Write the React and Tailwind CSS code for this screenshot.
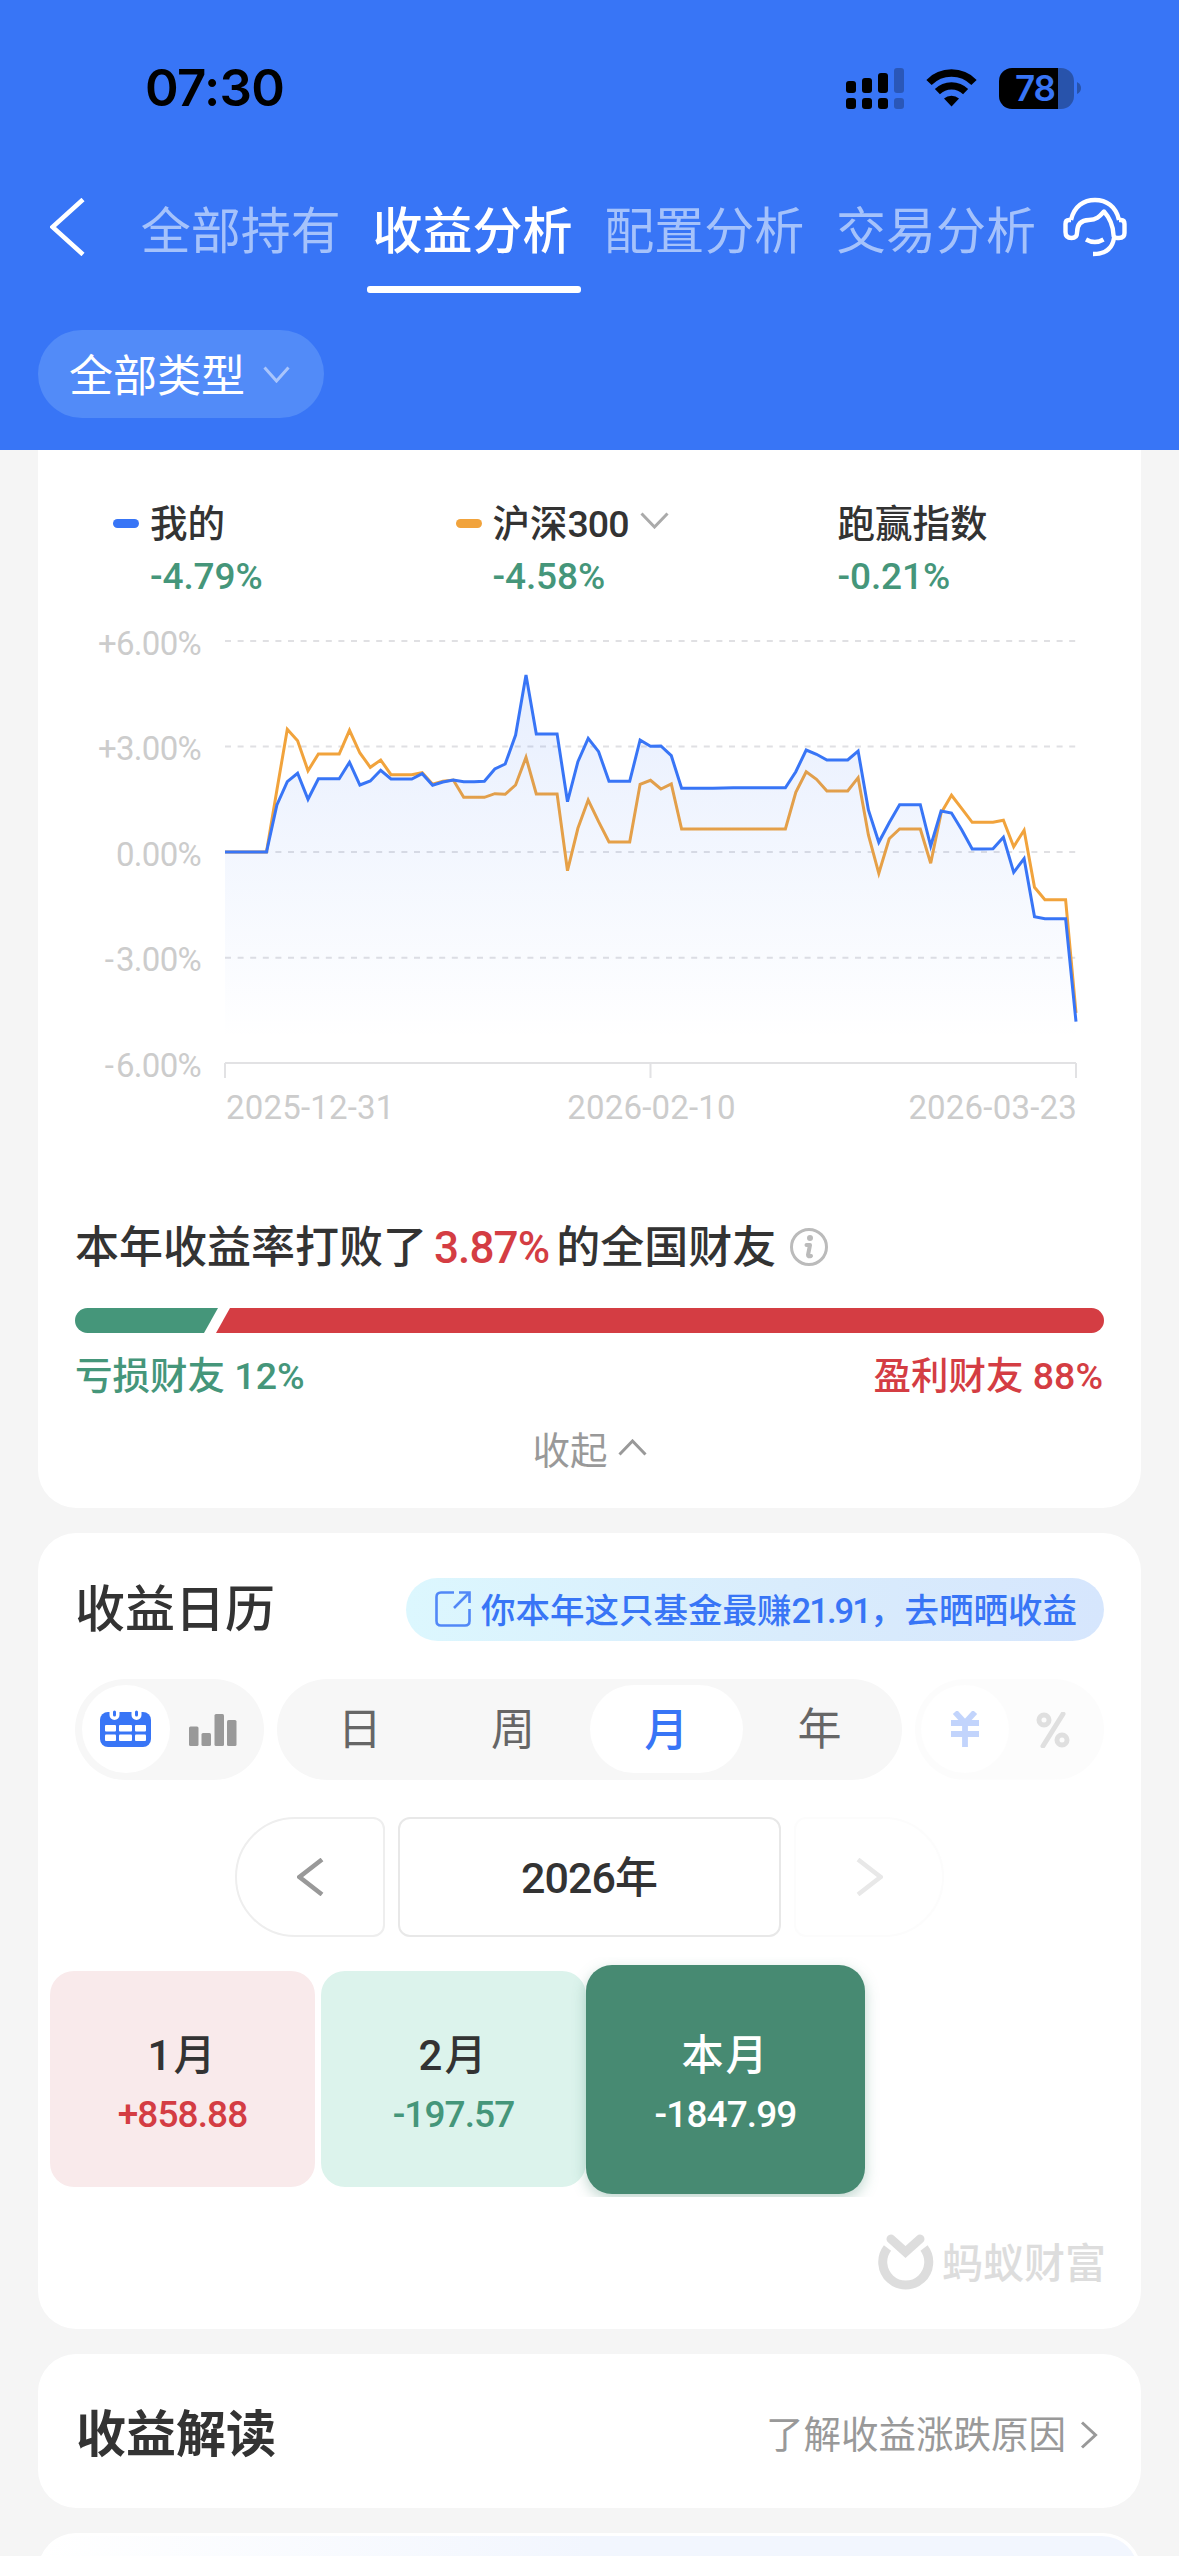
import React from "react";

const MINE = [
  852, 852, 852, 852, 852, 805, 781.7, 773.3, 799.3, 778.7, 778.7, 778.7, 762.3, 785, 781, 770.3, 779, 779, 779, 773.7,
  785.3, 782, 780, 781.7, 781.7, 781.3, 769, 764, 735, 675, 734, 734, 734, 801.7, 761.7, 738.3, 751.7, 781.3, 781.3,
  781.3, 740, 746.3, 746, 755.7, 788.3, 788.3, 788.3, 788.2, 788, 787.8, 787.7, 787.7, 787.7, 787.7, 787.7, 771.7, 750,
  754.3, 760, 760, 760, 751, 810, 842.3, 822.7, 804.7, 804.7, 804.7, 846, 811, 813, 830, 849, 849, 848.7, 837.3, 872.3,
  858.7, 916.7, 918.7, 918.7, 918.7, 1021.7,
];
const INDEX = [
  852, 852, 852, 852, 852, 790, 729.3, 740.7, 770.7, 754, 754, 754, 730.3, 753, 767.3, 760, 774.7, 774.7, 774.7, 772.7,
  784.3, 781.3, 780, 797.3, 797.3, 797.3, 793.7, 794.3, 785, 757.3, 794, 794, 794, 870.7, 828.3, 800, 821.7, 842, 842,
  842, 784.3, 780.3, 789, 784, 829, 829, 829, 829, 829, 829, 829, 829, 829, 829, 829, 792.3, 771.7, 779.3, 791, 791,
  791, 777.7, 835, 873.3, 838.7, 829, 829, 829, 863.3, 813, 795.3, 808.7, 822.3, 822.3, 822.3, 820.3, 846.7, 830.3,
  887.3, 899.7, 899.7, 899.7, 1013,
];

const TOP = 630;
const toPoints = (ys) => ys.map((y, i) => `${(3 + i * 10.378).toFixed(1)},${(y - TOP).toFixed(1)}`).join(" ");

function Chevron({ w, h, dir, stroke, sw = 3, className = "" }) {
  const d = {
    down: `M1.5 1.5 L${w / 2} ${h - 2} L${w - 1.5} 1.5`,
    up: `M1.5 ${h - 1.5} L${w / 2} 2 L${w - 1.5} ${h - 1.5}`,
    left: `M${w - 2} 1.5 L2.5 ${h / 2} L${w - 2} ${h - 1.5}`,
    right: `M2 1.5 L${w - 2.5} ${h / 2} L2 ${h - 1.5}`,
  }[dir];
  return (
    <svg width={w} height={h} viewBox={`0 0 ${w} ${h}`} className={`shrink-0 ${className}`}>
      <path d={d} fill="none" stroke={stroke} strokeWidth={sw} />
    </svg>
  );
}

function StatusIcons() {
  return (
    <div className="flex items-center text-black">
      <svg width="58" height="41" viewBox="0 0 58 41">
        <rect x="0" y="13" width="10" height="12" rx="3" />
        <rect x="16" y="10" width="10" height="15" rx="3" />
        <rect x="32" y="5" width="10" height="20" rx="3" />
        <rect x="48" y="0" width="10" height="25" rx="3" opacity=".25" />
        <rect x="0" y="30" width="10" height="11" rx="3" />
        <rect x="16" y="30" width="10" height="11" rx="3" />
        <rect x="32" y="30" width="10" height="11" rx="3" />
        <rect x="48" y="30" width="10" height="11" rx="3" opacity=".25" />
      </svg>
      <svg width="51" height="38" viewBox="0 0 51 38" className="ml-[22px]">
        <path d="M3 13.5 A31.5 31.5 0 0 1 48 13.5" fill="none" stroke="#000" strokeWidth="7.4" />
        <path d="M11.4 22.6 A20 20 0 0 1 39.6 22.6" fill="none" stroke="#000" strokeWidth="7.2" />
        <path d="M18 29.6 A11 11 0 0 1 33 29.6 L25.5 37.4 Z" />
      </svg>
      <div className="ml-[22px] flex h-[41px] w-[75px] items-center justify-center overflow-hidden rounded-[13px] bg-[linear-gradient(to_right,#000_59px,#2853ab_59px)]">
        <span className="-ml-[3px] font-['Inter'] text-[35px] font-semibold leading-[41px] tracking-[-1px] text-[#3875f6]">78</span>
      </div>
      <svg width="4" height="12" viewBox="0 0 4 12" className="ml-[3px]">
        <path d="M0 0 Q4 2 4 6 Q4 10 0 12Z" fill="#2853ab" />
      </svg>
    </div>
  );
}

function Headset() {
  return (
    <svg width="66" height="62" viewBox="0 0 66 62" className="ml-[9px] shrink-0" fill="none" stroke="#fff" strokeWidth="4.4" strokeLinejoin="round">
      <path d="M9 23 C12 9 22 3 33 3 C44 3 54 9 57 23" />
      <path d="M9 23 H7 Q3.500 23 3.500 27 V35 Q3.500 41 9.500 41 Q15 41 15 36 C15 26 20 23 27 23 C35 23 38 19 42 14.500 C47 20 51 26 51.500 38 Q51.500 41 55 41 H57 Q62.500 41 62.500 36 V27 Q62.500 23 59 23 H57" />
      <path d="M24 42.500 Q33 47.500 41.500 42.500" />
      <path d="M52 41 C50.500 51 44 57 31 57" />
    </svg>
  );
}

const Tab = ({ children, active }) => (
  <div className="flex w-[231.7px] flex-col items-center">
    <span className={active ? "-ml-[2px] h-[60px] text-[50px] font-medium leading-[60px] text-white" : "-ml-[2px] h-[60px] text-[50px] leading-[60px] text-[#a5c2fb]"}>
      {children}
    </span>
    {active && <span className="mt-[24px] h-[7px] w-[214px] rounded-[3px] bg-white" />}
  </div>
);

function Header() {
  return (
    <header className="h-[450px] bg-[#3875f6]">
      <div className="flex h-[176px] items-center justify-between pl-[145px] pr-[98px]">
        <span className="font-['Inter'] text-[51px] font-semibold leading-[60px] tracking-[-0.7px] text-black">07:30</span>
        <StatusIcons />
      </div>
      <div className="flex h-[122px] items-start pl-[50px]">
        <Chevron w={35} h={58} dir="left" stroke="#fff" sw={4.6} className="mt-[22px]" />
        <div className="ml-[41px] mt-[26px] flex">
          <Tab>全部持有</Tab>
          <Tab active>收益分析</Tab>
          <Tab>配置分析</Tab>
          <Tab>交易分析</Tab>
        </div>
        <div className="mt-[21px]">
          <Headset />
        </div>
      </div>
      <div className="ml-[38px] mt-[32px] flex h-[88px] w-[286px] items-center rounded-full bg-[#528bf8] pl-[31px]">
        <span className="pt-[5px] text-[44px] leading-[60px] text-white">全部类型</span>
        <Chevron w={27} h={17} dir="down" stroke="#a9c5fc" sw={3} className="ml-[18px]" />
      </div>
    </header>
  );
}

function Legend({ color, name, digits, value, arrow }) {
  return (
    <div className="flex">
      {color && <span className={`mt-[31px] mr-[11px] h-[9px] w-[26px] rounded-full ${color}`} />}
      <div>
        <div className="flex h-[70px] items-center pt-[2px] text-[37.500px] font-medium leading-[50px] text-[#333]">
          {name}
          {digits && <span className="tracking-[-1px]">{digits}</span>}
          {arrow && <Chevron w={29} h={17} dir="down" stroke="#aaa" sw={3} className="-mt-[8px] ml-[12px]" />}
        </div>
        <div className="-mt-[6px] h-[50px] text-[37px] font-medium leading-[50px] tracking-[-0.1px] text-[#45967a]">{value}</div>
      </div>
    </div>
  );
}

function Chart() {
  const grid = [641, 746.5, 852, 957.7, 1063].map((y) => y - TOP);
  return (
    <div className="mt-[28px]">
      <div className="flex h-[450px]">
        <div className="flex w-[163px] flex-col text-right text-[33px] tracking-[-0.7px] text-[#ccc]">
          {["+6.00%", "+3.00%", "0.00%", "-3.00%", "-6.00%"].map((t) => (
            <span key={t} className="mb-[65.400px] h-[40px] shrink-0 leading-[28px]">
              {t[0] === "-" ? <span className="tracking-[2px]">-</span> : t[0]}
              {t.slice(1)}
            </span>
          ))}
        </div>
        <svg width="860" height="450" viewBox="0 0 860 450" className="ml-[21px]">
          <defs>
            <linearGradient id="area" x1="0" y1="45" x2="0" y2="410" gradientUnits="userSpaceOnUse">
              <stop offset="0" stopColor="#3875f6" stopOpacity=".12" />
              <stop offset="1" stopColor="#3875f6" stopOpacity="0" />
            </linearGradient>
          </defs>
          {grid.map((y) => (
            <line key={y} x1="3" x2="854" y1={y} y2={y} stroke="#e0e0e3" strokeWidth="2" strokeDasharray="6 6.600" />
          ))}
          <path d="M3 433 H854 M3 433 V448 M428.500 433 V448 M854 433 V448" stroke="#e2e2e4" strokeWidth="2" fill="none" />
          <polyline points={toPoints(INDEX)} fill="none" stroke="#f1a33c" strokeWidth="3" />
          <polygon points={`3,433 ${toPoints(MINE)} 854,433`} fill="url(#area)" />
          <polyline points={toPoints(MINE)} fill="none" stroke="#3875f6" strokeWidth="3" />
        </svg>
      </div>
      <div className="ml-[188px] mr-[64px] mt-[8px] flex h-[40px] items-center justify-between text-[33px] tracking-[0.2px] text-[#ccc]">
        <span>2025-12-31</span>
        <span>2026-02-10</span>
        <span>2026-03-23</span>
      </div>
    </div>
  );
}

function ProfitCard() {
  return (
    <section className="h-[1058px] rounded-b-[38px] bg-white">
      <div className="grid grid-cols-[342.5px_382px_1fr] pl-[75px] pt-[38px]">
        <Legend color="bg-[#3875f6]" name="我的" value="-4.79%" />
        <Legend color="bg-[#f1a33c]" name="沪深" digits="300" value="-4.58%" arrow />
        <Legend name="跑赢指数" value="-0.21%" />
      </div>
      <Chart />
      <div className="mt-[90px] flex h-[60px] items-center pl-[37px] text-[44px] font-medium leading-[60px] text-[#333]">
        本年收益率打败了
        <span className="mx-[7px] tracking-[-0.900px] text-[#d43d43]">3.87%</span>
        的全国财友
        <svg width="38" height="38" viewBox="0 0 38 38" className="-mt-[2px] ml-[14px]" fill="none" stroke="#bbb">
          <circle cx="19" cy="19" r="17.500" strokeWidth="3" />
          <circle cx="20" cy="10" r="3" fill="#bbb" stroke="none" />
          <path d="M16.500 17 H20 L18 27 Q18 29 21 28" strokeWidth="4" strokeLinecap="round" strokeLinejoin="round" />
        </svg>
      </div>
      <svg width="1029" height="25" viewBox="0 0 1029 25" className="ml-[37px] mt-[30px] block">
        <path d="M12.500 0 H143 L129 25 H12.500 A12.500 12.500 0 0 1 12.500 0Z" fill="#45967a" />
        <path d="M155 0 H1016.500 A12.500 12.500 0 0 1 1016.500 25 H141Z" fill="#d43d43" />
      </svg>
      <div className="ml-[37px] mr-[38px] mt-[18px] flex justify-between text-[37.500px] font-medium leading-[50px]">
        <span className="text-[#45967a]">亏损财友 12%</span>
        <span className="text-[#d43d43]">盈利财友 88%</span>
      </div>
      <div className="mt-[25px] flex items-center justify-center text-[37.500px] leading-[50px] text-[#999]">
        收起
        <Chevron w={29} h={17} dir="up" stroke="#999" sw={3} className="-mt-[7px] ml-[10px]" />
      </div>
    </section>
  );
}

function CalendarIcon() {
  return (
    <svg width="52" height="38" viewBox="0 0 52 38">
      <rect x="0" y="2" width="51" height="35" rx="8" fill="#3875f6" />
      <path d="M14.500 0 V5 M36.500 0 V5" stroke="#fff" strokeWidth="10" strokeLinecap="round" />
      <path d="M14.500 2 V5 M36.500 2 V5" stroke="#3875f6" strokeWidth="3" strokeLinecap="round" />
      <g fill="#fff">
        <rect x="5" y="15" width="11" height="6.500" rx="1" />
        <rect x="19" y="15" width="13" height="6.500" rx="1" />
        <rect x="35" y="15" width="11" height="6.500" rx="1" />
        <rect x="5" y="24.500" width="11" height="6.500" rx="1" />
        <rect x="19" y="24.500" width="13" height="6.500" rx="1" />
        <rect x="35" y="24.500" width="11" height="6.500" rx="1" />
      </g>
    </svg>
  );
}

function Segments() {
  return (
    <div className="ml-[37px] mt-[38px] flex h-[101px] text-[44px] leading-[60px] text-[#666]">
      <div className="flex w-[189px] items-center rounded-full bg-[#f7f7f7] pl-[7px]">
        <div className="mb-px flex h-[88px] w-[88px] items-center justify-center rounded-full bg-white">
          <CalendarIcon />
        </div>
        <svg width="48" height="32" viewBox="0 0 48 32" className="ml-[19px]" fill="#999">
          <rect x="0" y="12.500" width="9.500" height="19.500" rx="1.500" />
          <rect x="12.500" y="19" width="9.500" height="13" rx="1.500" />
          <rect x="25.500" y="0" width="9.500" height="32" rx="1.500" />
          <rect x="38" y="6" width="9.500" height="26" rx="1.500" />
        </svg>
      </div>
      <div className="ml-[13px] grid w-[625px] grid-cols-4 items-center rounded-full bg-[#f7f7f7] px-[6px] text-center">
        <span className="pt-px">日</span>
        <span className="pt-px">周</span>
        <span className="mb-px flex h-[88px] items-center justify-center rounded-full bg-white pt-[3px] font-medium text-[#3875f6]">月</span>
        <span className="pt-px">年</span>
      </div>
      <div className="ml-[13px] flex w-[189px] items-center rounded-full bg-[#f7f7f7] pl-[6px] opacity-30">
        <div className="mb-px flex h-[88px] w-[88px] items-center justify-center rounded-full bg-white">
          <svg width="30" height="36" viewBox="0 0 30 36" fill="none" stroke="#3875f6" strokeWidth="5.800">
            <path d="M5 1 L15 12 L25 1 M1 12 H29 M1 23 H29 M15 11 V36" />
          </svg>
        </div>
        <svg width="34" height="36" viewBox="0 0 34 36" className="ml-[27px]" fill="none" stroke="#999" strokeWidth="5">
          <circle cx="8" cy="8" r="5" />
          <circle cx="26" cy="28" r="5" />
          <path d="M27 2 L7 34" strokeLinecap="round" />
        </svg>
      </div>
    </div>
  );
}

const Month = ({ name, value, box, tone }) => (
  <div className={`flex flex-col items-center ${box}`}>
    <span className="text-[42px] font-medium leading-[50px] tracking-[2px]">{name}</span>
    <span className={`mt-[9px] text-[37px] font-medium leading-[50px] tracking-[-0.9px] ${tone}`}>{value}</span>
  </div>
);

function CalendarCard() {
  return (
    <section className="mt-[25px] h-[796px] rounded-[38px] bg-white pt-[45px]">
      <div className="flex h-[63px] items-center justify-between pl-[37px] pr-[37px]">
        <h2 className="text-[50px] font-medium leading-[60px] text-[#333]">收益日历</h2>
        <div className="flex h-[63px] w-[698px] items-center rounded-full bg-[linear-gradient(to_right,#dcf7fe,#d9ecfc_55%,#d6e6fd)] pl-[29px] text-[34.500px] font-medium leading-[50px] text-[#3875f6]">
          <svg width="37" height="37" viewBox="0 0 37 37" fill="none" stroke="#5288f7" strokeWidth="2.600" className="mr-[9px] shrink-0">
            <path d="M19 1.500 H6 Q1.500 1.500 1.500 6 V30 Q1.500 34.500 6 34.500 H30 Q34.500 34.500 34.500 30 V18" />
            <path d="M24 1.500 H34.500 V12 M34.500 1.500 L19 17" />
          </svg>
          <span className="whitespace-nowrap pt-[3px]">
            你本年这只基金最赚<span className="tracking-[-1.900px]">21.91</span>，去晒晒收益
          </span>
        </div>
      </div>
      <Segments />
      <div className="mt-[37px] flex h-[120px] justify-center gap-[13px]">
        <div className="flex w-[150px] items-center justify-center rounded-l-[60px] rounded-r-[12px] border-2 border-[#eee]">
          <Chevron w={27} h={38} dir="left" stroke="#999" sw={4.5} />
        </div>
        <div className="flex w-[383px] items-center justify-center rounded-[12px] border-2 border-[#e8e8e8] pt-[2px] text-[43px] font-medium leading-[60px] text-[#333]">
          <span className="tracking-[-1px]">2026</span>年
        </div>
        <div className="flex w-[150px] items-center justify-center rounded-l-[12px] rounded-r-[60px] border-2 border-[#fcfcfc]">
          <Chevron w={27} h={38} dir="right" stroke="#e8e8e8" sw={4.5} />
        </div>
      </div>
      <div className="ml-[12px] mt-[20px] flex h-[240px] items-start overflow-hidden">
        <Month name="1月" value="+858.88" box="mt-[14px] h-[216px] w-[265px] rounded-[24px] bg-[#f9eaeb] pt-[60px] text-[#333]" tone="text-[#d43d43]" />
        <Month name="2月" value="-197.57" box="ml-[6px] mt-[14px] h-[216px] w-[265px] rounded-[24px] bg-[#dcf3ec] pt-[60px] text-[#333]" tone="text-[#45967a]" />
        <Month name="本月" value="-1847.99" box="mt-[8px] h-[229px] w-[279px] rounded-[26px] bg-[#478a72] pt-[66px] text-white shadow-[0_5px_14px_rgba(71,138,114,0.35)]" tone="text-white" />
      </div>
      <div className="mr-[35px] mt-[37px] flex h-[60px] items-center justify-end text-[#ddd]">
        <svg width="56" height="60" viewBox="0 0 56 60" fill="none" stroke="#ddd" strokeWidth="9">
          <path d="M9.500 14 A23 23 0 1 0 46 14" />
          <path d="M13 5 L27.500 18 L42 5" strokeLinecap="round" />
        </svg>
        <span className="ml-[8px] text-[41px] font-medium leading-[60px]">蚂蚁财富</span>
      </div>
    </section>
  );
}

export default function App() {
  return (
    <div className="h-[2556px] w-[1179px] overflow-hidden bg-[#f5f5f5] font-['Roboto','Noto_Sans_CJK_SC',sans-serif]">
      <Header />
      <main className="mx-[38px]">
        <ProfitCard />
        <CalendarCard />
        <section className="mt-[25px] flex h-[154px] items-center justify-between rounded-[38px] bg-white pl-[38px] pr-[43px] pt-[7px]">
          <h2 className="text-[50px] font-bold leading-[60px] text-[#333]">收益解读</h2>
          <div className="flex items-center text-[37.500px] leading-[50px] text-[#999]">
            了解收益涨跌原因
            <Chevron w={18} h={28} dir="right" stroke="#999" sw={3} className="ml-[14px]" />
          </div>
        </section>
        <section className="mt-[25px] h-[60px] rounded-t-[38px] bg-white px-[3px] pt-[3px]">
          <div className="h-[57px] rounded-t-[36px] bg-[linear-gradient(to_right,#fff,#f2f6fe_50%,#f2f6fe)]" />
        </section>
      </main>
    </div>
  );
}
